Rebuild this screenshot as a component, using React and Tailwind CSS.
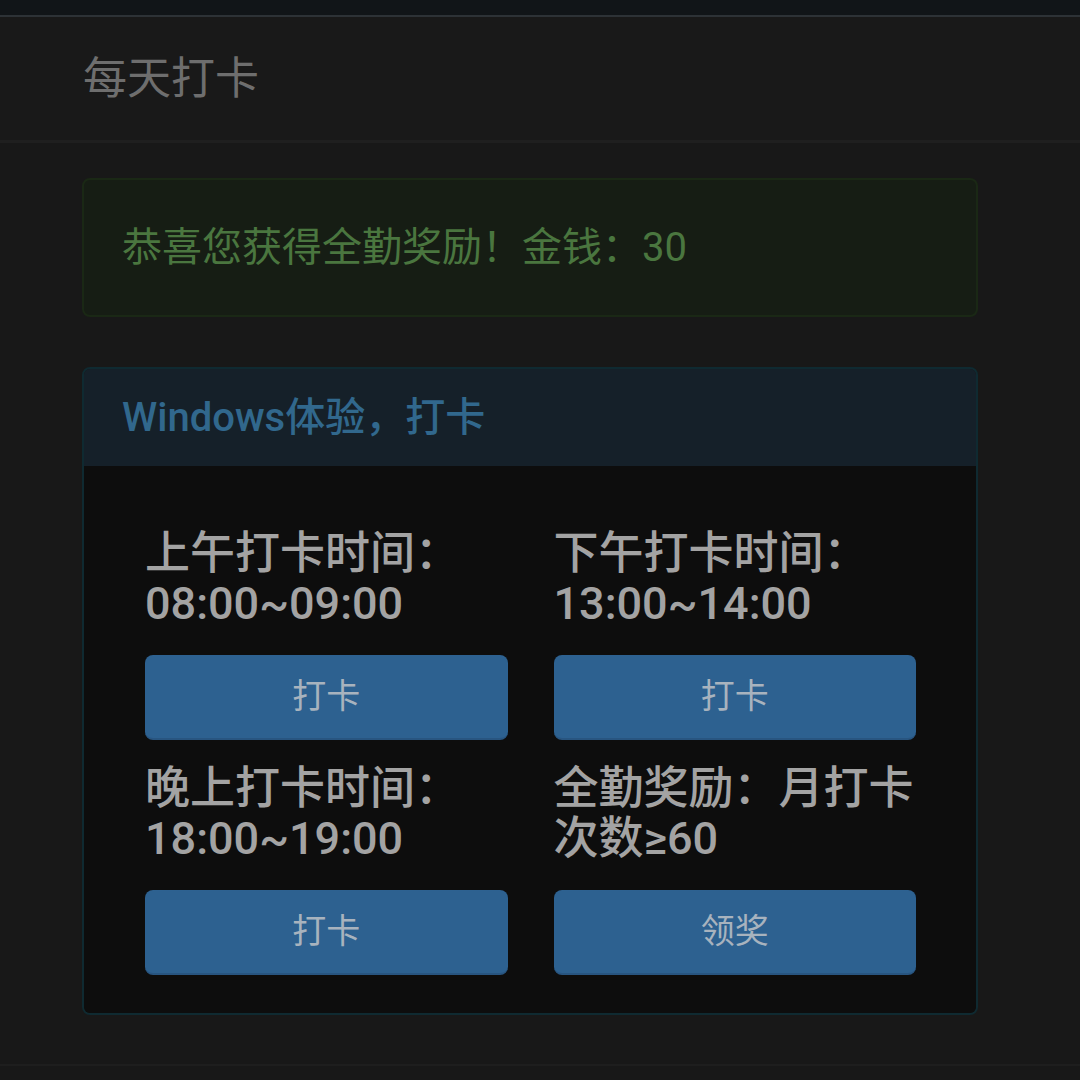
const cells = [
  { label: '上午打卡时间：08:00~09:00', action: '打卡' },
  { label: '下午打卡时间：13:00~14:00', action: '打卡' },
  { label: '晚上打卡时间：18:00~19:00', action: '打卡' },
  { label: '全勤奖励：月打卡次数≥60', action: '领奖' },
]

function CheckCell({ label, action, second }) {
  return (
    <div className={second ? 'mt-[24px]' : ''}>
      <p className="text-[45px] leading-[50px] font-medium text-[#a3a3a3]">{label}</p>
      <button className="mt-[26px] h-[85px] w-full rounded-lg bg-[#2d6190] border-b-2 border-[#285580] text-[34px] text-[#a8b3be]">
        {action}
      </button>
    </div>
  )
}

export default function App() {
  return (
    <div
      className="min-h-screen bg-[#181818]"
      style={{ fontFamily: 'Roboto, "Noto Sans CJK SC", sans-serif' }}
    >
      <div className="h-[15px] bg-[#111518]" />
      <header className="h-[128px] border-t-2 border-b-[3px] border-t-[#2d3236] border-b-[#1f1f1f] bg-[#191919] flex items-center pl-[83px]">
        <h1 className="text-[44px] text-[#6e6e6e]">每天打卡</h1>
      </header>

      <main className="w-[978px] pl-[82px] pt-[35px]">
        <div className="h-[139px] rounded-lg border-2 border-[#1a2815] bg-[#161d14] flex items-center px-[38px]">
          <p className="text-[40px] text-[#4a763f]">恭喜您获得全勤奖励！金钱：30</p>
        </div>

        <section className="mt-[50px] rounded-lg border-2 border-[#0f2a31] overflow-hidden">
          <div className="h-[97px] bg-[#152029] flex items-center px-[38px]">
            <h2 className="text-[40px] font-medium text-[#31688d]">Windows体验，打卡</h2>
          </div>
          <div className="bg-[#0d0d0d] grid grid-cols-2 gap-x-[46px] pl-[61px] pr-[60px] pt-[63px] pb-[38px]">
            {cells.map((c, i) => (
              <CheckCell key={i} label={c.label} action={c.action} second={i >= 2} />
            ))}
          </div>
        </section>
      </main>

      <div className="mt-[49px] border-t-2 border-[#1e1e1e]" />
    </div>
  )
}
